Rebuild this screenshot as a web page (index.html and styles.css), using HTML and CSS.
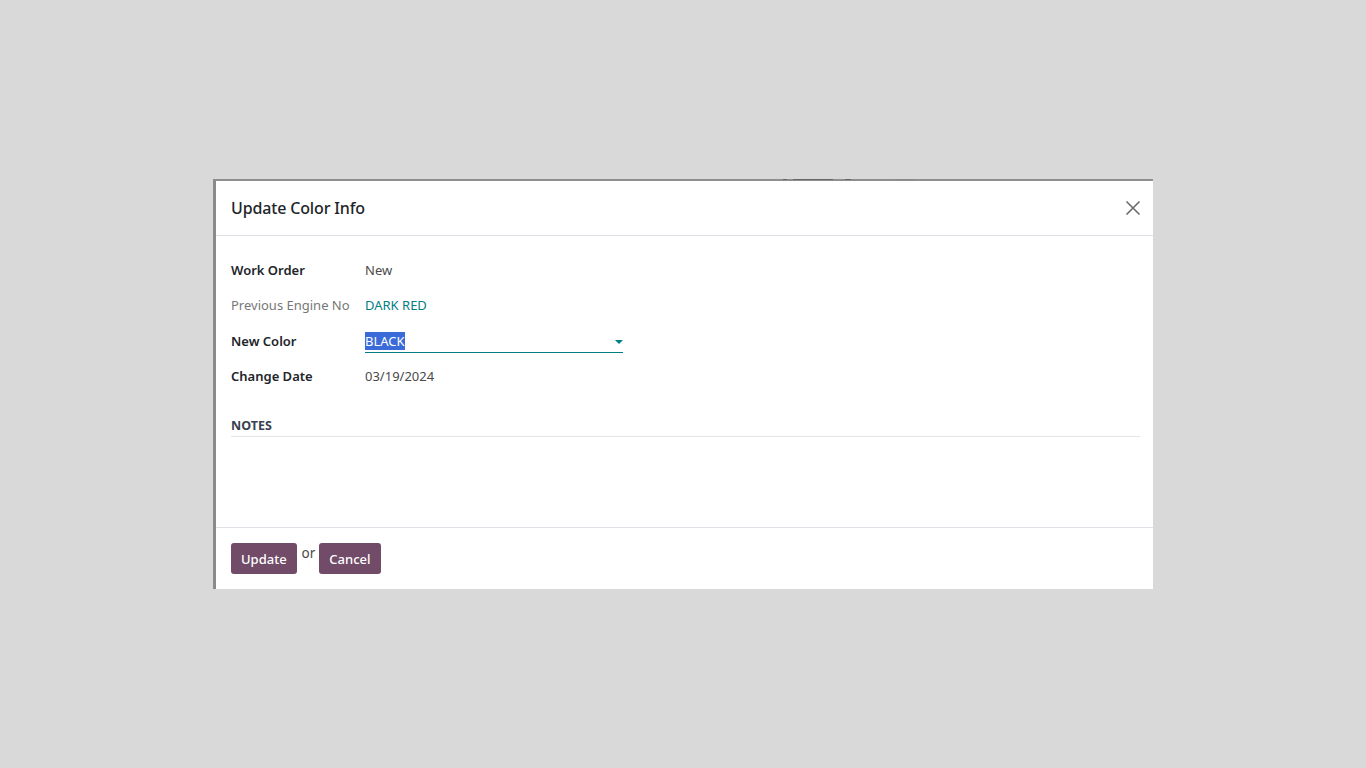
FILE: index.html
```html
<!DOCTYPE html>
<html lang="en">
<head>
<meta charset="utf-8">
<title>Update Color Info</title>
<link rel="stylesheet" href="styles.css">
</head>
<body>
<div class="modal">
  <div class="marks"><span class="m1"></span><span class="m2"></span><span class="m3"></span><span class="m4"></span></div>
  <header class="modal-header">
    <h4 class="modal-title">Update Color Info</h4>
    <button class="close" aria-label="Close">
      <svg width="16" height="16" viewBox="0 0 16 16"><path d="M1.5 1.5 L14.5 14.5 M14.5 1.5 L1.5 14.5" stroke="#6b6b6b" stroke-width="1.6" fill="none"/></svg>
    </button>
  </header>
  <main class="modal-body">
    <div class="form-grid">
      <div class="label strong">Work Order</div>
      <div class="value">New</div>
      <div class="label muted">Previous Engine No</div>
      <div class="value link">DARK RED</div>
      <div class="label strong">New Color</div>
      <div class="value">
        <div class="select"><span class="sel">BLACK</span><span class="caret"></span></div>
      </div>
      <div class="label strong">Change Date</div>
      <div class="value">03/19/2024</div>
    </div>
    <div class="separator">NOTES</div>
  </main>
  <footer class="modal-footer">
    <button class="btn">Update</button>
    <span class="or">or</span>
    <button class="btn">Cancel</button>
  </footer>
</div>
</body>
</html>
```
FILE: styles.css
```css
* { box-sizing: border-box; }
html, body { margin: 0; padding: 0; }
body {
  background: #d9d9d9;
  font-family: "Noto Sans", "Open Sans", sans-serif;
  height: 768px;
  overflow: hidden;
  padding: 179px 0 0 213px;
}
.modal {
  position: relative;
  width: 940px;
  height: 410px;
  background: #fff;
  border-left: 3px solid #8a8a8a;
  border-top: 2px solid #8f8f8f;
  display: flex;
  flex-direction: column;
}
.marks { position: absolute; top: -3px; left: 567px; height: 3px; width: 140px; }
.marks span { position: absolute; top: 1px; height: 1px; background: #666; }
.marks .m1 { left: 0; width: 4px; }
.marks .m2 { left: 10px; width: 40px; }
.marks .m3 { left: 62px; width: 6px; }
.marks .m4 { left: 112px; width: 20px; background: #888; }
.modal-header {
  height: 55px;
  border-bottom: 1px solid #dee2e6;
  display: flex;
  align-items: center;
  justify-content: space-between;
  padding: 0 12px 0 15px;
}
.modal-title {
  margin: 0;
  font-size: 16px;
  font-weight: 500;
  color: #212529;
  letter-spacing: -0.15px;
}
.close {
  border: 0;
  background: transparent;
  padding: 0;
  width: 16px;
  height: 16px;
  display: flex;
}
.modal-body {
  flex: 1;
  padding: 16px 13px 0 15px;
}
.form-grid {
  display: grid;
  grid-template-columns: 134px 258px;
  grid-auto-rows: 35.5px;
  align-items: center;
  font-size: 13px;
}
.label { color: #212529; }
.label.strong { font-weight: 600; }
.label.muted { color: #777; }
.value { color: #4a4a4a; }
.value.link { color: #017e84; }
.select {
  position: relative;
  border-bottom: 1px solid #017e84;
  height: 23px;
  display: flex;
  align-items: center;
  margin-top: 1px;
}
.sel { background: #3a6bd9; color: #fff; line-height: 18px; }
.caret {
  position: absolute;
  right: 0;
  top: 10px;
  width: 0; height: 0;
  border-left: 4px solid transparent;
  border-right: 4px solid transparent;
  border-top: 4px solid #017e84;
}
.separator {
  margin-top: 23px;
  padding-bottom: 2px;
  border-bottom: 1px solid #e6e6e6;
  font-size: 12.5px;
  font-weight: 700;
  color: #374151;
}
.modal-footer {
  height: 62px;
  border-top: 1px solid #dee2e6;
  display: flex;
  align-items: flex-start;
  padding: 15px 15px 0 15px;
}
.btn {
  background: #714b67;
  color: #fff;
  border: 0;
  border-radius: 3px;
  height: 31px;
  padding: 0 10px;
  font-family: inherit;
  font-size: 13px;
  font-weight: 500;
}
.or {
  font-size: 13.5px;
  color: #4a4a4a;
  margin: 1px 4px 0 5px;
}
```
